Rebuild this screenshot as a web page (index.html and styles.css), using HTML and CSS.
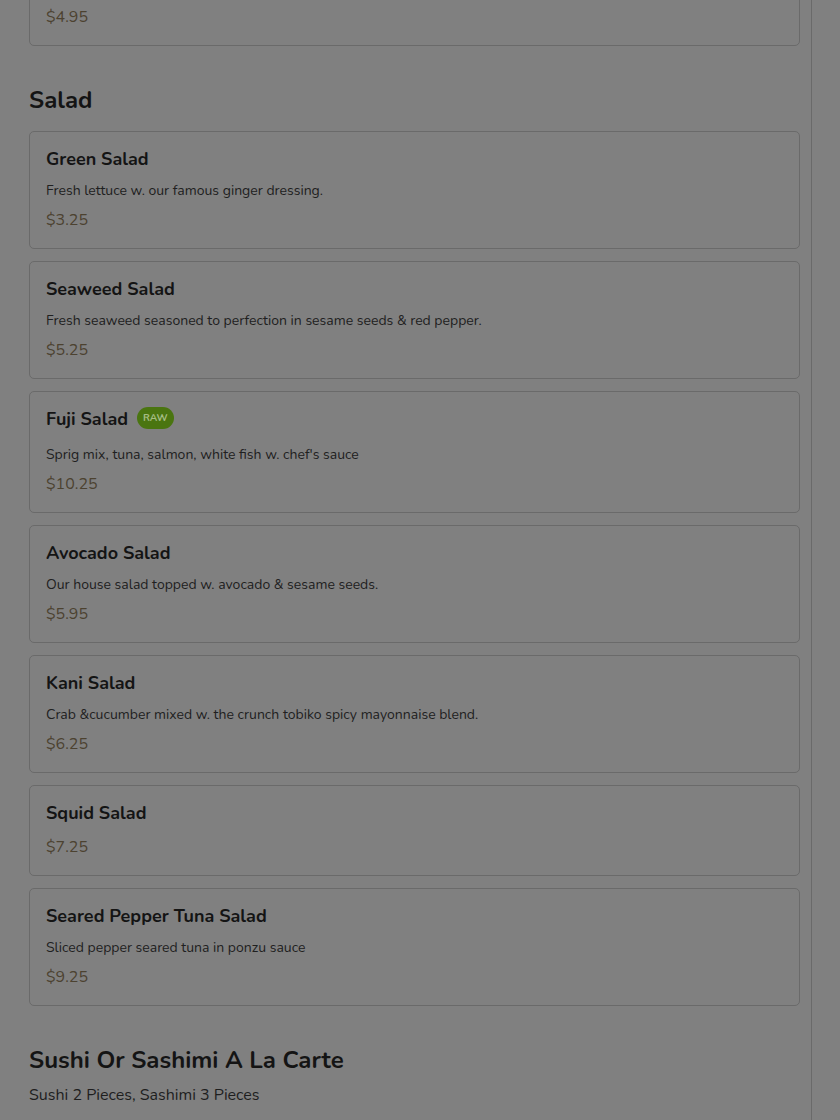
FILE: index.html
```html
<!DOCTYPE html>
<html>
<head>
<meta charset="utf-8">
<link rel="stylesheet" href="styles.css">
</head>
<body>
<div class="page">
  <main class="menu">
    <div class="card card-top">
      <div class="price">$4.95</div>
    </div>

    <section class="section">
      <h2 class="section-title">Salad</h2>
      <div class="items">
        <div class="card">
          <div class="title-row"><h3 class="item-title">Green Salad</h3></div>
          <p class="desc">Fresh lettuce w. our famous ginger dressing.</p>
          <div class="price">$3.25</div>
        </div>
        <div class="card">
          <div class="title-row"><h3 class="item-title">Seaweed Salad</h3></div>
          <p class="desc">Fresh seaweed seasoned to perfection in sesame seeds &amp; red pepper.</p>
          <div class="price">$5.25</div>
        </div>
        <div class="card">
          <div class="title-row"><h3 class="item-title">Fuji Salad</h3><span class="badge">RAW</span></div>
          <p class="desc">Sprig mix, tuna, salmon, white fish w. chef's sauce</p>
          <div class="price">$10.25</div>
        </div>
        <div class="card">
          <div class="title-row"><h3 class="item-title">Avocado Salad</h3></div>
          <p class="desc">Our house salad topped w. avocado &amp; sesame seeds.</p>
          <div class="price">$5.95</div>
        </div>
        <div class="card">
          <div class="title-row"><h3 class="item-title">Kani Salad</h3></div>
          <p class="desc">Crab &amp;cucumber mixed w. the crunch tobiko spicy mayonnaise blend.</p>
          <div class="price">$6.25</div>
        </div>
        <div class="card">
          <div class="title-row"><h3 class="item-title">Squid Salad</h3></div>
          <div class="price">$7.25</div>
        </div>
        <div class="card">
          <div class="title-row"><h3 class="item-title">Seared Pepper Tuna Salad</h3></div>
          <p class="desc">Sliced pepper seared tuna in ponzu sauce</p>
          <div class="price">$9.25</div>
        </div>
      </div>
    </section>

    <section class="section">
      <h2 class="section-title">Sushi Or Sashimi A La Carte</h2>
      <p class="section-sub">Sushi 2 Pieces, Sashimi 3 Pieces</p>
    </section>
  </main>
</div>
</body>
</html>
```

FILE: styles.css
```css
html, body {
  margin: 0;
  padding: 0;
  background: #808080;
}
body {
  font-family: "Nunito", "Lato", "Noto Sans", sans-serif;
  color: #151515;
  height: 1120px;
  overflow: hidden;
}
.page {
  display: flex;
  min-height: 1120px;
}
.menu {
  width: 771px;
  padding: 0 11px 0 29px;
  border-right: 1px solid #6a6a6a;
  min-height: 1120px;
}
.card {
  border: 1px solid #6a6a6a;
  border-radius: 5px;
  padding: 17px 16px 16px 16px;
  display: flex;
  flex-direction: column;
}
.card-top {
  margin-top: -60px;
  padding-top: 64px;
  padding-bottom: 16px;
}
.section {
  padding-top: 38px;
}
.section-title {
  margin: 0 0 15px 0;
  font-size: 24px;
  line-height: 32px;
  font-weight: 700;
  color: #141414;
}
.section-sub {
  margin: -8px 0 0 0;
  font-size: 16px;
  line-height: 24px;
  color: #1e1e1e;
}
.items {
  display: flex;
  flex-direction: column;
  gap: 12px;
}
.title-row {
  display: flex;
  align-items: flex-start;
  gap: 9px;
  margin-bottom: 12px;
}
.item-title {
  margin: 0;
  font-size: 18px;
  line-height: 20px;
  font-weight: 700;
  color: #141414;
}
.badge {
  background: #4a7510;
  color: #a6bd84;
  font-size: 10px;
  font-weight: 700;
  line-height: 22px;
  height: 22px;
  margin: -2px 0 4px 0;
  padding: 0 6px;
  border-radius: 11px;
}
.desc {
  margin: 0 0 7px 0;
  font-size: 14px;
  line-height: 20px;
  color: #202020;
}
.price {
  font-size: 16px;
  line-height: 24px;
  color: #4c4230;
}
```
